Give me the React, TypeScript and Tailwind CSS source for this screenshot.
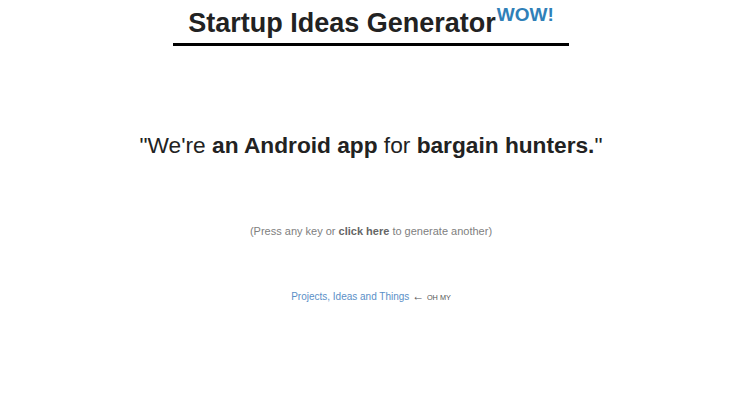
import React from "react";

export default function App() {
  return (
    <div
      className="w-[742px] min-h-[405px] bg-white flex flex-col items-center text-center"
      style={{ fontFamily: '"Liberation Sans", Arial, sans-serif' }}
    >
      <h1 className="mt-[7px] inline-block px-[15px] border-b-[3px] border-black text-[27px] font-bold leading-[33px] text-[#222] pb-[3px]">
        Startup Ideas Generator
        <sup className="text-[19px] text-[#2f80b8] top-[-0.6em] ml-[1px]">WOW!</sup>
      </h1>
      <p className="mt-[84px] text-[22.7px] leading-[30px] text-[#222]">
        "We're <b>an Android app</b> for <b>bargain hunters.</b>"
      </p>
      <p className="mt-[64px] text-[11px] leading-[14px] text-[#808080]">
        (Press any key or <b className="text-[#666]">click here</b> to generate another)
      </p>
      <p className="mt-[51px] text-[10px] leading-[14px] text-[#5b8fc7]">
        Projects, Ideas and Things{" "}
        <span className="text-[#555]">
          <span className="text-[12px]">←</span>{" "}
          <span className="text-[7.3px] uppercase">oh my</span>
        </span>
      </p>
    </div>
  );
}
